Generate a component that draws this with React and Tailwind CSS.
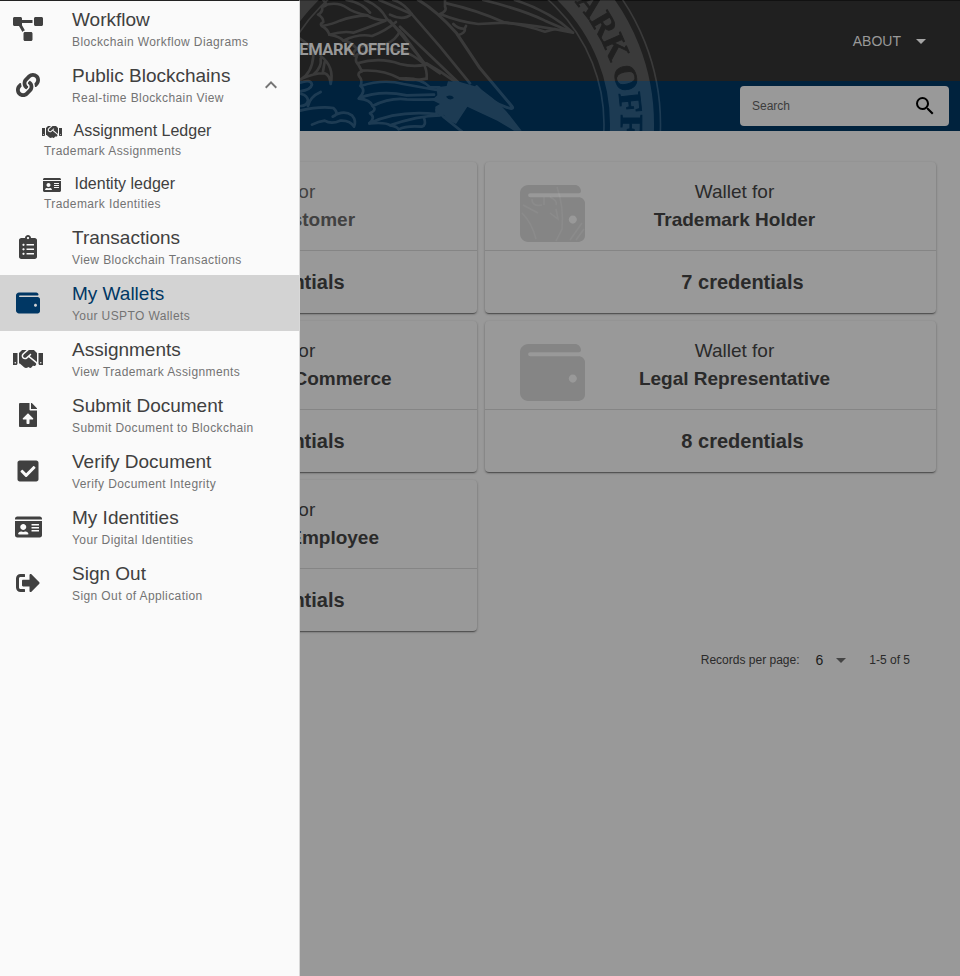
import React from "react";
import {
  FaProjectDiagram,
  FaLink,
  FaHandshake,
  FaIdCard,
  FaClipboardList,
  FaWallet,
  FaFileUpload,
  FaCheckSquare,
  FaSignOutAlt,
} from "react-icons/fa";

function NavText({ title, sub, active }) {
  return (
    <div className="flex flex-col whitespace-nowrap">
      <span className={`text-[19px] leading-[22px] ${active ? "text-[#003764]" : "text-[#404040]"}`}>{title}</span>
      <span className="mt-[2px] text-xs leading-[18px] tracking-[0.4px] text-[#737373]">{sub}</span>
    </div>
  );
}

function NavItem({ icon: Icon, iconWidth = "w-6", title, sub, active, children }) {
  return (
    <div className={`flex h-14 shrink-0 items-center ${active ? "bg-[#d3d3d3] text-[#003764]" : "text-[#404040]"}`}>
      <div className="flex w-14 shrink-0 justify-center">
        <Icon className={`h-6 shrink-0 ${iconWidth}`} />
      </div>
      <div className="pl-4 pt-[2px]">
        <NavText title={title} sub={sub} active={active} />
      </div>
      {children}
    </div>
  );
}

function SubItem({ icon: Icon, iconWidth, title, sub, pad, gap }) {
  return (
    <div className="h-[53px] shrink-0 pt-2 text-[#404040]">
      <div className={`flex h-5 items-center whitespace-nowrap ${pad} ${gap}`}>
        <Icon className={`mt-0.5 h-4 shrink-0 ${iconWidth}`} />
        <span className="text-base leading-5">{title}</span>
      </div>
      <div className="pl-11 text-xs leading-5 tracking-[0.4px] text-[#737373]">{sub}</div>
    </div>
  );
}

function Drawer() {
  return (
    <nav className="absolute left-0 top-0 z-10 flex h-[976px] w-[300px] flex-col border-r border-t border-r-[#d8d8d8] border-t-[#222] bg-[#fafafa]">
      <NavItem icon={FaProjectDiagram} iconWidth="w-[30px]" title="Workflow" sub="Blockchain Workflow Diagrams" />
      <NavItem icon={FaLink} title="Public Blockchains" sub="Real-time Blockchain View">
        <svg viewBox="0 0 24 24" className="ml-auto mr-4 h-6 w-6 fill-[#757575]">
          <path d="M7.41 15.41 12 10.83l4.59 4.58L18 14l-6-6-6 6z" />
        </svg>
      </NavItem>
      <SubItem icon={FaHandshake} iconWidth="w-5" title="Assignment Ledger" sub="Trademark Assignments" pad="pl-[42px]" gap="gap-[11.5px]" />
      <SubItem icon={FaIdCard} iconWidth="w-[18px]" title="Identity ledger" sub="Trademark Identities" pad="pl-[43px]" gap="gap-[13.5px]" />
      <NavItem icon={FaClipboardList} title="Transactions" sub="View Blockchain Transactions" />
      <NavItem icon={FaWallet} title="My Wallets" sub="Your USPTO Wallets" active />
      <NavItem icon={FaHandshake} iconWidth="w-[30px]" title="Assignments" sub="View Trademark Assignments" />
      <NavItem icon={FaFileUpload} title="Submit Document" sub="Submit Document to Blockchain" />
      <NavItem icon={FaCheckSquare} title="Verify Document" sub="Verify Document Integrity" />
      <NavItem icon={FaIdCard} iconWidth="w-[27px]" title="My Identities" sub="Your Digital Identities" />
      <NavItem icon={FaSignOutAlt} title="Sign Out" sub="Sign Out of Application" />
    </nav>
  );
}

/* Watermark seal: ring with lettering and the eagle's wing, head and beak */
function Seal() {
  return (
    <svg viewBox="0 0 960 131" className="absolute left-0 top-0 h-[131px] w-[960px]">
      <defs>
        <path id="ring" d="M438 -59A183 183 0 0 1 438 307" />
        <mask id="letters" maskUnits="userSpaceOnUse" x="0" y="0" width="960" height="131">
          <rect width="960" height="131" fill="white" />
          <g fill="black" stroke="black" strokeWidth="0.9" fontFamily="Liberation Serif, serif" fontWeight="700" fontSize="32">
            <text textAnchor="end">
              <textPath href="#ring" startOffset="225">ARK</textPath>
            </text>
            <text>
              <textPath href="#ring" startOffset="230" textLength="130" lengthAdjust="spacingAndGlyphs">OFFICE</textPath>
            </text>
          </g>
        </mask>
      </defs>
      <g opacity="0.115" fill="none" stroke="white">
        <circle cx="438" cy="124" r="194" strokeWidth="44" mask="url(#letters)" />
        <circle cx="438" cy="124" r="222.5" strokeWidth="1.6" />
        <circle cx="438" cy="124" r="166" strokeWidth="1.6" />
        <g transform="translate(290 0) scale(.33333)" strokeWidth="8" strokeLinejoin="round" strokeLinecap="round">
          <path d="M100 0Q118 18 96 20Q100 36 84 44Q100 52 100 66Q88 72 96 78Q130 72 150 62Q185 48 232 46" />
          <path d="M98 18Q140 2 172 24Q190 38 232 46Q250 58 286 62" />
          <path d="M96 78Q112 86 118 104Q160 92 190 98Q230 84 286 62" />
          <path d="M118 104Q150 110 160 122Q205 100 246 108Q288 92 318 66" />
          <path d="M160 122Q182 124 200 146Q230 128 282 136Q320 120 330 92" />
          <path d="M170 0Q215 8 240 38M225 0Q270 18 290 56L340 104L400 186M268 0L365 42" />
          <path d="M365 42Q340 64 300 44M310 0Q340 8 365 42L450 140L540 250M330 80L520 262M300 62L400 186L450 220" />
          <path strokeWidth="9" d="M385 0Q440 32 500 100L570 205L665 318Q675 330 650 322Q600 306 560 260" />
          <path d="M465 0V20Q472 34 450 42Q510 66 565 72L645 68Q700 74 765 95L795 87" />
          <path d="M470 10Q560 30 645 68M580 0Q700 30 765 62L849 98M675 0Q780 34 849 98M645 68Q740 76 849 98M490 72Q506 88 524 86Q528 98 504 106M524 86L528 78" />
          <path d="M200 146Q180 164 200 170Q194 184 204 192L216 214Q200 218 208 230Q218 240 212 258Q230 272 206 296Q240 298 248 318" />
          <path d="M200 164Q270 136 330 152Q370 162 400 190Q412 210 410 236" />
          <path d="M202 190Q270 170 330 192Q370 202 408 194M216 212Q280 208 330 236Q370 244 410 236" />
          <path d="M212 258Q280 236 340 252L440 270M208 294Q270 270 350 286L432 284" />
          <path d="M248 318Q300 292 350 298Q400 300 432 298M248 318Q262 330 240 340Q258 352 238 370Q320 330 440 342" />
          <path d="M238 370Q290 366 300 376Q380 348 450 346M300 376Q320 378 326 388Q350 376 395 380Q410 376 402 354" />
          <path d="M330 236Q390 230 420 262L448 262M410 190L450 214L520 262M440 330L460 350L520 398" />
          <path fill="white" stroke="none" fillRule="evenodd" d="M440 262L470 258L474 244L510 246L560 260Q610 290 650 335L695 392H672L622 362L532 320L498 372Q470 360 462 345L436 340V320L450 312L426 300L442 286ZM468 290Q478 304 492 294Q484 282 468 290Z" />
          <path d="M30 116Q66 138 70 168Q66 220 30 240M34 236Q80 218 104 220Q120 226 122 252Q134 200 92 168M92 176Q96 200 72 222M104 186L98 220" />
          <path d="M30 248Q62 236 66 254Q62 270 30 274M34 282Q52 286 54 302Q50 318 32 318M30 332Q90 318 130 324Q150 342 128 350Q160 328 186 346Q200 362 192 380Q180 360 150 362Q124 374 104 362Q86 364 66 374M54 318Q60 290 92 276" />
        </g>
      </g>
    </svg>
  );
}

function Card({ name, count, soft, marked }) {
  return (
    <section className="flex h-[151px] flex-col rounded bg-[#999] shadow-[0_2px_1px_-1px_rgba(0,0,0,0.3),0_1px_2px_0_rgba(0,0,0,0.25),0_1px_3px_0_rgba(0,0,0,0.12)]">
      <div className="flex h-[89px] border-b border-[#858585]">
        <div className="relative flex w-[134px] shrink-0 pl-[34.5px] pt-[19px]">
          <FaWallet className="h-[65px] w-[65px] text-[#858585]" />
          {marked && (
            <svg viewBox="0 0 65 57" className="absolute left-[34.5px] top-[23px] h-[57px] w-[65px] fill-none stroke-white/5 stroke-[1.5]">
              <path d="M3 20L18 28M2 28Q12 38 16 54M12 14Q12 22 22 20M24 12V20M30 12Q38 16 36 20M30 28L38 34L36 24M37 2Q44 22 42 44L36 56M50 55L62 38M56 55L64 44" />
            </svg>
          )}
        </div>
        <div
          className={`flex w-[231px] flex-col items-center whitespace-nowrap pt-4 text-[19px] leading-7 ${soft ? "text-[#414141]" : "text-[#2a2a2a]"}`}
        >
          <span>Wallet for</span>
          <span className="font-bold">{name}</span>
        </div>
      </div>
      <div className="flex h-[62px] items-center justify-center pl-16 text-xl font-bold text-[#2a2a2a]">{count} credentials</div>
    </section>
  );
}

function Caret({ className }) {
  return (
    <svg viewBox="0 0 24 24" className={`h-6 w-6 ${className}`}>
      <path d="M7 10l5 5 5-5z" />
    </svg>
  );
}

export default function App() {
  return (
    <div className="relative h-[976px] w-[960px] overflow-hidden bg-[#999] font-['Liberation_Sans',Arial,sans-serif]">
      <header className="relative">
        <div className="flex h-[81px] items-center justify-between border-t border-[#111] bg-[#202020] pr-[27px]">
          <div className="flex w-[409px] justify-end pt-[17px] font-['Roboto',sans-serif] text-[16.5px] font-bold leading-5 tracking-[-0.4px] text-[#999]">
            <span className="relative z-[1] whitespace-nowrap">TRADEMARK OFFICE</span>
          </div>
          <div className="flex items-center gap-2 text-sm text-[#999]">
            <span>ABOUT</span>
            <Caret className="fill-[#a5a5a5]" />
          </div>
        </div>
        <div className="flex h-[50px] items-center justify-end bg-[#00223d] pr-[11px]">
          <div className="relative z-[1] flex h-10 w-[209px] items-center justify-between rounded bg-[#999] pl-3 pr-3">
            <span className="text-xs text-[#3c3c3c]">Search</span>
            <svg viewBox="0 0 24 24" className="h-6 w-6 fill-black">
              <path d="M9.5 3A6.5 6.5 0 0 1 16 9.5c0 1.61-.59 3.09-1.56 4.23l.27.27h.79l5 5-1.5 1.5-5-5v-.79l-.27-.27A6.52 6.52 0 0 1 9.5 16a6.5 6.5 0 0 1 0-13m0 2C7 5 5 7 5 9.5S7 14 9.5 14 14 12 14 9.5 12 5 9.5 5" />
            </svg>
          </div>
        </div>
        <Seal />
      </header>
      <main className="pl-[26px] pr-6 pt-[31px]">
        <div className="grid grid-cols-[451px_451px] gap-2">
          <Card name="USPTO Customer" count={5} soft />
          <Card name="Trademark Holder" count={7} marked />
          <Card name="Department of Commerce" count={6} />
          <Card name="Legal Representative" count={8} />
          <Card name="Government Employee" count={4} />
        </div>
        <div className="mt-4 flex h-[26px] items-center justify-end pr-[26px] text-xs text-[#2a2a2a]">
          <span>Records per page:</span>
          <span className="ml-4 text-sm text-[#1c1c1c]">6</span>
          <Caret className="ml-1.5 fill-[#444]" />
          <span className="ml-4">1-5 of 5</span>
        </div>
      </main>
      <Drawer />
    </div>
  );
}
